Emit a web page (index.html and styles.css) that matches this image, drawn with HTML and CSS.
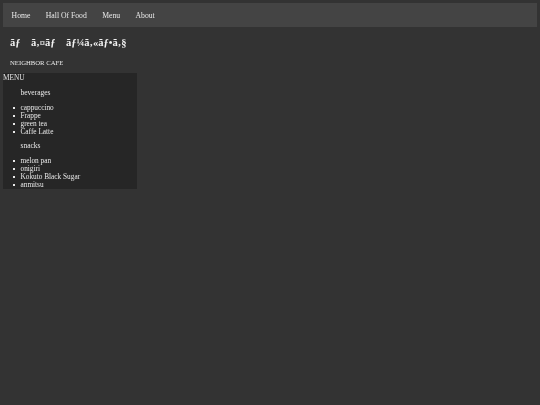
FILE: index.html
```html
<!DOCTYPE html>
<html lang="en">
<head>
    <meta charset="UTF-8">
    <title>Neighbor Cafe</title>
    <link rel="stylesheet" href="styles.css">
</head>
<body>
    <nav class="navbar">
        <a href="#">Home</a>
        <a href="#">Hall Of Food</a>
        <a href="#">Menu</a>
        <a href="#">About</a>
    </nav>
    <header class="banner">
        <h1>ãƒ&#8195;ã‚¤ãƒ&#8195;ãƒ¼ã‚«ãƒ•ã‚§</h1>
        <p>NEIGHBOR CAFE</p>
    </header>
    <aside class="menu">
        <div class="menu-title">MENU</div>
        <h2>beverages</h2>
        <ul>
            <li>cappuccino</li>
            <li>Frappe</li>
            <li>green tea</li>
            <li>Caffe Latte</li>
        </ul>
        <h2>snacks</h2>
        <ul>
            <li>melon pan</li>
            <li>onigiri</li>
            <li>Kokuto Black Sugar</li>
            <li>anmitsu</li>
        </ul>
    </aside>
</body>
</html>
```

FILE: styles.css
```css
body { margin: 3px; background-color: #333; color: #e8e8e8; font-family: "Liberation Serif", serif; font-size: 7.3px; filter: blur(.3px); }
.navbar { display: flex; gap: 15.4px; height: 24px; padding: 0 8.6px; align-items: center; background-color: #444; }
.navbar a { color: #e8e8e8; text-decoration: none; font-size: 7.7px; }
.banner { padding: 10px 7px 0; }
.banner h1 { margin: 0; color: #f2f2f2; font-size: 10.5px; line-height: 12px; white-space: pre; }
.banner p { margin: 9px 0 0; line-height: 9px; font-size: 6.7px; }
.menu { width: 133.5px; margin-top: 6px; background-color: #262626; }
.menu-title { padding-bottom: 1px; line-height: 9px; }
.menu h2 { margin: 0; padding: 5px 0 7px 17.5px; font-size: 7.5px; font-weight: normal; line-height: 9px; }
.menu ul { margin: 0; padding: 0 0 0 9.5px; list-style: none; }
.menu li { display: flex; align-items: center; gap: 6px; line-height: 8px; }
.menu li::before { content: ""; width: 2px; height: 2px; background-color: #e8e8e8; }
```
